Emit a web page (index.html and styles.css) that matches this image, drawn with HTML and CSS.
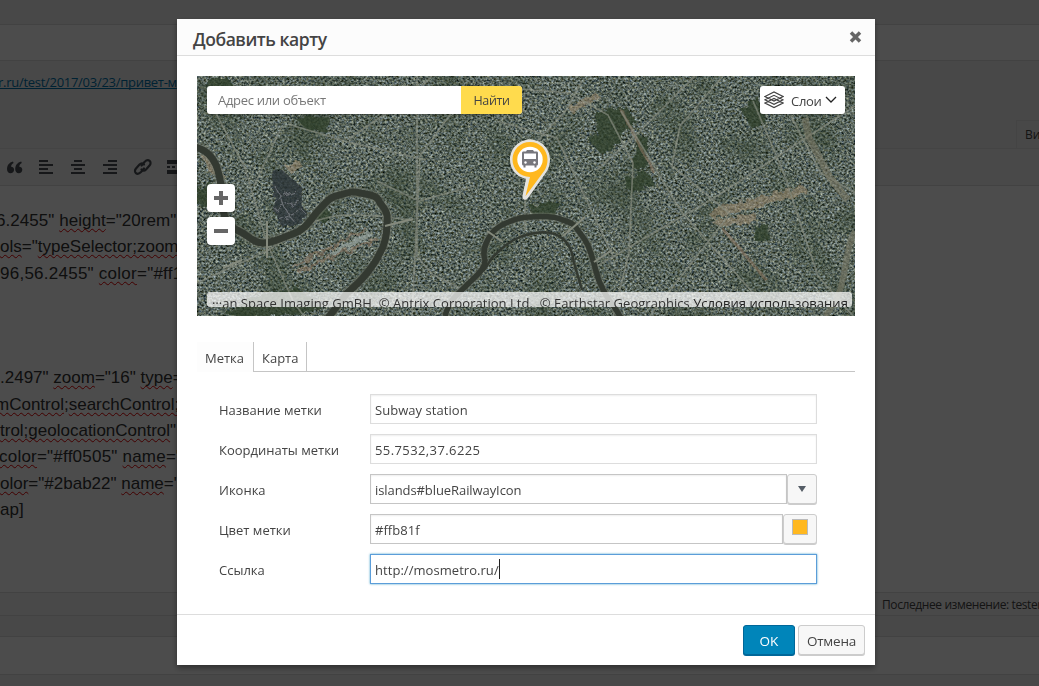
FILE: index.html
```html
<!DOCTYPE html>
<html lang="ru">
<head>
<meta charset="utf-8">
<title>Добавить карту</title>
<link rel="stylesheet" href="styles.css">
</head>
<body>
<div class="page">
  <div class="strip strip-top"></div>
  <div class="strip strip-title"></div>
  <div class="permalink"><a class="link">r.ru/test/2017/03/23/привет-м</a><div class="mode-tab">Ви</div></div>
  <div class="toolbar">
    <svg class="tools" width="190" height="36" viewBox="0 149 190 36" fill="#4a4f55">
      <path d="M13 161.500c-4 1-6 4-6 7.500 0 2.500 1.300 4.200 3.500 4.200s3.600-1.500 3.600-3.400c0-1.800-1.300-3-3-3 .1-1.700.9-2.900 2.500-3.700zm8.200 0c-4 1-6 4-6 7.500 0 2.500 1.300 4.200 3.500 4.200s3.600-1.500 3.600-3.400c0-1.800-1.300-3-3-3 .1-1.700.9-2.900 2.500-3.700z"/>
      <path d="M39 160h9v2h-9zm0 4h14v2H39zm0 4h9v2h-9zm0 4h14v2H39zM74 160h8v2h-8zm-3 4h14v2H71zm3 4h8v2h-8zm-3 4h14v2H71zM108 160h9v2h-9zm-5 4h14v2h-14zm5 4h9v2h-9zm-5 4h14v2h-14zM167 160h14v4h-14zm0 6h3v2h-3zm5 0h3v2h-3zm5 0h3v2h-3zm-10 4h14v4h-14z"/>
      <g fill="none" stroke="#4a4f55" stroke-width="2.200" stroke-linecap="round"><path d="M141.500 165.500l3-3.500c4-4 8 0 5 3.500l-3.500 4c-1.500 1.500-3.300 1.200-4.500 0"/><path d="M144 168.500l-3 3.500c-4 4-8 0-5-3.500l3.500-4c1.500-1.500 3.300-1.200 4.500 0"/></g>
    </svg>
  </div>
  <div class="editor">
    <p class="row r1">6.2455" <u>height</u>="20rem"</p>
    <p class="row r2"><u>ols</u>="<u>typeSelector;zoom</u></p>
    <p class="row r3">96,56.2455" <u>color</u>="#ff1</p>
    <p class="row r4">.2497" <u>zoom</u>="16" <u>type</u>=</p>
    <p class="row r5"><u>mControl</u>;<u>searchControl;</u></p>
    <p class="row r2"><u>trol;geolocationControl</u>"</p>
    <p class="row r7"><u>color</u>="#ff0505" <u>name</u>="</p>
    <p class="row r2"><u>olor</u>="#2bab22" <u>name</u>="</p>
    <p class="row r2">ap]</p>
  </div>
  <div class="status">Последнее изменение: tester</div>
  <div class="strip strip-gap"></div>
  <div class="strip strip-box"></div>
  <div class="strip strip-end"></div>
</div>

<div class="overlay">
  <div class="modal">
    <div class="modal-head"><span class="title">Добавить карту</span>
      <svg class="close" width="13" height="12" viewBox="0 0 13 12"><path d="M2 1.500l9 9M11 1.500l-9 9" stroke="#666" stroke-width="3.500"/></svg>
    </div>
    <div class="modal-body">
      <div class="map">
        <svg class="satellite" width="658" height="240" viewBox="0 0 658 240">
          <defs>
            <filter id="city" x="0" y="0" width="100%" height="100%" color-interpolation-filters="sRGB">
              <feTurbulence type="fractalNoise" baseFrequency=".42 .46" numOctaves="3" seed="7"/>
              <feColorMatrix values=".95 .16 0 0 -.2  .96 .12 .06 0 -.17  .94 0 .2 0 -.2  0 0 0 0 1"/>
            </filter>
            <filter id="zones" x="0" y="0" width="100%" height="100%" color-interpolation-filters="sRGB">
              <feTurbulence type="fractalNoise" baseFrequency=".022" numOctaves="4" seed="12"/>
              <feColorMatrix values="0 0 0 0 .18  0 0 0 0 .24  0 0 0 0 .16  3 0 0 0 -1.400"/>
            </filter>
            <filter id="rough" x="-10%" y="-10%" width="120%" height="120%">
              <feTurbulence type="fractalNoise" baseFrequency=".12" numOctaves="2" seed="4"/>
              <feDisplacementMap in="SourceGraphic" scale="9"/>
            </filter>
            <pattern id="blocksA" width="9" height="7" patternUnits="userSpaceOnUse" patternTransform="rotate(32)"><path d="M0 0h9M0 0v7" stroke="#a9afa3" stroke-width=".8"/><path d="M3 3h4v2H3z" fill="#2b3329"/></pattern>
            <pattern id="blocksB" width="8" height="10" patternUnits="userSpaceOnUse" patternTransform="rotate(-28)"><path d="M0 0h8M0 0v10" stroke="#b4bab0" stroke-width=".8"/><path d="M3 2h2v5H3z" fill="#29332a"/></pattern>
          </defs>
          <rect width="658" height="240" filter="url(#city)"/>
          <g filter="url(#rough)">
            <path d="M0 0h250l-40 90-80 30L0 80zM400 100l258 50v90H420z" fill="url(#blocksA)" opacity=".2"/>
            <path d="M240 0h300l-70 110-40 100-110-90-90 40-70-40zM540 60l118-40v120l-90 20z" fill="url(#blocksB)" opacity=".2"/>
          </g>
          <rect width="658" height="240" filter="url(#zones)" opacity=".42"/>
          <g filter="url(#rough)">
            <g fill="#2c3c29" opacity=".75"><path d="M12 5l18-4 6 9-12 7-14-4zM98 42l20-2 16 2-5 14-17-1zM112 138l16-8 6 9-8 8zM397 38l32-8 10 16-22 20-15-7zM0 112l25-6 10 18-20 8-15-3zM440 58l12 4-4 30-12 3zM332 130l30-4-5 16-20-3zM557 150l14-3 1 16-14 2zM428 102l22-6 8 12-26 8zM50 222l50-10 26 20-40 8H30z"/><path d="M545 35l15-15 10 25-14 9zM391 63l28-16 5 20-20 11z"/></g>
            <g fill="#a18d72" opacity=".5"><path d="M510 137l20-8 42-11 36-7 2 7-38 10-55 15zM3 78l16 6 9 17-14-3zM88 90l14-6 4 8-13 5zM305 30l15-8 6 14-12 2zM370 30l30-12 4 4-30 14zM513 145l45-8 2 9-36 5z"/></g>
            <g fill="#2d3338" opacity=".8"><path d="M75 98l10-4 20 18 3 32-22 8-9-17z"/></g>
            <g stroke="#8e9298" stroke-width="1.200" opacity=".6"><path d="M78 110l17 34M75 124l24-10M78 134l24-10M82 144l24-10"/></g>
            <g fill="none" stroke="#947963" stroke-width="3" opacity=".5"><path d="M95 191l75-38M100 195l80-32M526 153l45 53M458 98l-34-64"/></g>
            <path d="M135 178l39-20" stroke="#9aa6a0" stroke-width="4" opacity=".7"/>
          </g>
          <g fill="none" stroke="#8b8f83" stroke-width="1.700" opacity=".65">
            <path d="M0 207l70-32 45-28c25-12 50-9 100-3M15 30l33 62 22 75 27 60 10 13M85 50L57 110M91 48l60 18 78 18M235 0l-18 18-67 46M220 0v180l15 18 31 16M263 25l-40 55-8 160M323 13l50 4 38 22 25 48-4 90-20 80M385 5l-15 28-48 52M424 35l60 100 72 82M498 0l-58 58-40 36M526 0l-43 50-8 40M556 25l30 70 35 105 35 40M594 40l30 57 34 20M300 45l60 17 56 118M658 30L520 120 400 190M475 90l58 48-80 102M328 110v45M180 105l42 20 55-15"/>
          </g>
          <path d="M608 42l4 20 21 40 18 22" fill="none" stroke="#777462" stroke-width="7" opacity=".6"/>
          <path d="M658 155c-14 25-4 55-30 85" fill="none" stroke="#727363" stroke-width="6" opacity=".7"/>
          <g fill="none" stroke="#72786b" stroke-linejoin="round" opacity=".5">
            <path d="M-2 71C20 76 23 99 25 117c0 18 2 31 15 37s16 13 26 13 18-5 27-8c16-5 20-15 27-23 9-10 14-16 23-17 10-3 14-4 20-2 12 2 18 3 20 10 7 8 8 13 7 20 0 14-2 17-4 24-6 12-8 16-16 26-7 9-12 13-20 20l-19 25" stroke-width="10"/>
            <path d="M248 240c4-14 8-18 22-31 8-8 18-15 18-25-3-9 0-17 7-27 8-10 28-16 38-16 12-1 24-1 33 3 13 4 12 7 17 13 8 10 9 15 12 24 4 12 5 22 10 30 4 11 10 15 19 31" stroke-width="8"/>
          </g>
          <g fill="none" stroke="#333931" stroke-linejoin="round">
            <path d="M-2 71C20 76 23 99 25 117c0 18 2 31 15 37s16 13 26 13 18-5 27-8c16-5 20-15 27-23 9-10 14-16 23-17 10-3 14-4 20-2 12 2 18 3 20 10 7 8 8 13 7 20 0 14-2 17-4 24-6 12-8 16-16 26-7 9-12 13-20 20l-19 25" stroke-width="7"/>
            <path d="M248 240c4-14 8-18 22-31 8-8 18-15 18-25-3-9 0-17 7-27 8-10 28-16 38-16 12-1 24-1 33 3 13 4 12 7 17 13 8 10 9 15 12 24 4 12 5 22 10 30 4 11 10 15 19 31" stroke-width="5.500"/>
            <path d="M286 195c6-6 6-12 14-18 9-10 22-17 33-19 12-3 24-2 32 4 9 7 10 15 12 25l8 27" stroke-width="2.500"/>
          </g>
          <g stroke="#858a7d" stroke-width="2"><path d="M70 145v37M188 150l28-7M290 155l16 11M366 160l22-19M397 186l18-12M26 192l19-8"/></g>
        </svg>
        <div class="map-ui">
          <div class="map-top">
            <div class="search"><span class="search-input">Адрес или объект</span><span class="search-btn">Найти</span></div>
            <div class="layers">
              <svg width="20" height="18" viewBox="0 0 20 18" fill="#fff" stroke="#444" stroke-width="1.200"><path d="M1 12l9-4.500 9 4.500-9 4.500zM1 8.800l9-4.500 9 4.500-9 4.500zM1 5.500L10 1l9 4.500-9 4.500z"/></svg>
              <span class="layers-text">Слои</span>
              <svg class="chev" width="12" height="8" viewBox="0 0 12 8"><path d="M1 1l5 5 5-5" fill="none" stroke="#222" stroke-width="1.300"/></svg>
            </div>
          </div>
          <div class="zoom">
            <div class="zoom-btn"><svg width="14" height="14"><path d="M5 0h4v5h5v4H9v5H5V9H0V5h5z" fill="#666"/></svg></div>
            <div class="zoom-btn"><svg width="14" height="14"><path d="M0 5h14v4H0z" fill="#666"/></svg></div>
          </div>
        </div>
        <svg class="pin" width="42" height="64" viewBox="0 0 42 64">
          <path d="M21 .5C10 .5 1 9.500 1 20.500c0 9.500 6 17 16 19.300L13.500 57c-.6 4 3.600 5 5.700 1.800L37.500 33c2.200-3.500 3.500-8 3.500-12.500C41 9.500 32 .5 21 .5z" fill="#e4e3df"/>
          <path d="M21 3C11.300 3 3.500 10.800 3.500 20.500S11 37.700 21 38L16.500 57.200 35.500 31.500c2-3.200 3-6.800 3-11C38.500 10.800 30.700 3 21 3z" fill="#ffb81f"/>
          <circle cx="21" cy="20.500" r="12.700" fill="#fff"/>
          <path d="M18 11h6l1 1.500h2.500c1 0 1.500.6 1.500 1.500v11c0 1-.6 1.500-1.500 1.500v2h-2v-2h-9v2h-2v-2c-1 0-1.500-.6-1.500-1.500V14c0-.9.500-1.500 1.500-1.500H17z" fill="#77777c"/>
          <path d="M15 14.500h12V20H15z" fill="#fff"/><circle cx="16.500" cy="23.500" r="1.200" fill="#fff"/><circle cx="25.500" cy="23.500" r="1.200" fill="#fff"/>
        </svg>
        <div class="copyright"><span class="dots">…</span><span class="copy-text">an Space Imaging GmBH, © Antrix Corporation Ltd., © Earthstar Geographics <span class="terms">Условия использования</span></span></div>
      </div>
      <div class="tabs"><span class="tab tab-on">Метка</span><span class="tab tab-off">Карта</span><span class="tab-rest"></span></div>
      <div class="form">
        <div class="field"><label>Название метки</label><div class="input">Subway station</div></div>
        <div class="field"><label>Координаты метки</label><div class="input coords">55.7532,37.6225</div></div>
        <div class="field"><label>Иконка</label><div class="input dark icon-value">islands#blueRailwayIcon</div><div class="side-btn drop"><svg width="8" height="6"><path d="M0 0h8L4 6z" fill="#555d66"/></svg></div></div>
        <div class="field"><label>Цвет метки</label><div class="input dark">#ffb81f</div><div class="side-btn color"><i class="swatch"></i></div></div>
        <div class="field"><label>Ссылка</label><div class="input focus">http://mosmetro.ru/<i class="caret"></i></div></div>
      </div>
    </div>
    <div class="modal-foot"><span class="btn ok">OK</span><span class="btn cancel">Отмена</span></div>
  </div>
</div>
</body>
</html>
```

FILE: styles.css
```css
* { box-sizing: border-box; }
body { margin: 0; width: 1039px; height: 686px; overflow: hidden; background: #f1f1f1; font: 13px "Open Sans", "Noto Sans", sans-serif; color: #444; }
.page { width: 1039px; height: 686px; overflow: hidden; display: flex; flex-direction: column; }
.strip { flex: none; border-bottom: 1px solid #dedede; }
.strip-top { height: 25px; }
.strip-title { height: 36px; background: #fff; }
.permalink { height: 88px; flex: none; display: flex; justify-content: space-between; border-bottom: 1px solid #e5e5e5; }
.link { color: #0073aa; text-decoration: underline; text-decoration-skip-ink: none; padding-top: 12px; margin-left: -2px; letter-spacing: -.28px; }
.mode-tab { width: 23px; height: 28px; margin-top: 59px; padding: 5px 0 0 8px; border: 1px solid #e5e5e5; border-width: 1px 0 0 1px; font-size: 12px; }
.toolbar { height: 37px; flex: none; background: #f5f5f5; border-bottom: 1px solid #dedede; }
.tools { display: block; }
.editor { flex: none; height: 406px; background: #fff; padding-top: 22px; font: 17px/26.400px "Liberation Sans", Arial, sans-serif; color: #333; }
.row { margin: 0; white-space: nowrap; }
.row u { text-decoration: underline wavy #e00000 1px; text-decoration-skip-ink: none; text-underline-offset: 2px; }
.r1 { margin-left: -4px; letter-spacing: .05px; }
.r3 { letter-spacing: .25px; }
.r4 { margin-top: 78px; }
.r5 { margin-left: -5px; }
.r7 { margin-left: -1px; letter-spacing: .22px; }
.status { height: 24px; flex: none; border: 1px solid #dedede; border-width: 1px 0; padding-left: 882px; font-size: 12px; line-height: 24px; white-space: nowrap; color: #444; background: #f5f5f5; letter-spacing: -.4px; }
.strip-gap { height: 21px; }
.strip-box { height: 38px; background: #fff; }
.strip-end { height: 12px; }
.overlay { position: fixed; inset: 0; background: rgba(0,0,0,.7); padding: 19px 0 0 177px; }
.modal { width: 698px; height: 646px; background: #fff; box-shadow: 0 3px 6px rgba(0,0,0,.4); display: flex; flex-direction: column; }
.modal-head { height: 37px; flex: none; background: #fcfcfc; border-bottom: 1px solid #ddd; display: flex; justify-content: space-between; align-items: center; padding: 0 13px 0 16px; }
.title { font-size: 17.500px; font-weight: 600; line-height: 24px; padding-top: 3px; letter-spacing: -.45px; }
.modal-body { flex: none; height: 558px; padding: 20px; }
.map { position: relative; width: 658px; height: 240px; overflow: hidden; background: #50594e; }
.satellite { display: block; }
.map-ui { position: absolute; inset: 0; padding: 10px; }
.map-top { display: flex; justify-content: space-between; height: 28px; }
.search, .layers { display: flex; background: #fff; border-radius: 3px; overflow: hidden; box-shadow: 0 1px 2px rgba(0,0,0,.25); }
.search-input { width: 254px; padding-left: 11px; line-height: 28px; color: #777; letter-spacing: -.3px; }
.search-btn { width: 61px; background: #ffdb4d; text-align: center; line-height: 30px; font-size: 12.500px; letter-spacing: -.4px; }
.layers { width: 85px; align-items: center; padding-left: 4px; }
.layers-text { margin: 2px 3px 0 7px; letter-spacing: -.3px; }
.zoom { margin-top: 70px; display: flex; flex-direction: column; gap: 5px; }
.zoom-btn { width: 28px; height: 28px; border-radius: 4px; background: #fff; display: grid; place-items: center; box-shadow: 0 1px 2px rgba(0,0,0,.25); }
.pin { position: absolute; left: 312px; top: 63px; }
.copyright { position: absolute; left: 10px; top: 216px; width: 645px; height: 15px; border-radius: 3px; background: rgba(255,255,255,.72); white-space: nowrap; line-height: 23px; color: #333; padding: 0 5px; display: flex; justify-content: space-between; overflow: hidden; }
.dots { line-height: 14px; }
.copy-text { letter-spacing: .04px; }
.terms { color: #222; text-decoration: underline; text-decoration-skip-ink: none; text-underline-offset: 0; }
.tabs { display: flex; height: 30px; margin-top: 26px; }
.tab { padding: 7px 8px 0; line-height: 18px; border-right: 1px solid #c5c5c5; }
.tab-on { width: 57px; background: #fdfdfd; }
.tab-off { width: 53px; border-bottom: 1px solid #c5c5c5; }
.tab-rest { flex: 1; border-bottom: 1px solid #c5c5c5; }
.form { padding: 22px 38px 0 22px; display: flex; flex-direction: column; gap: 10px; }
.field { display: flex; height: 30px; }
.field label { width: 151px; line-height: 32px; flex: none; }
.input { flex: 1; height: 30px; border: 1px solid #ddd; padding: 2px 0 0 4px; box-shadow: inset 0 1px 2px rgba(0,0,0,.07); display: flex; align-items: center; letter-spacing: .05px; }
.coords { letter-spacing: .4px; }
.icon-value { letter-spacing: -.08px; }
.dark { border-color: #c5c5c5; }
.focus { border-color: #5b9dd9; box-shadow: 0 0 2px rgba(30,140,190,.8); }
.caret { width: 1px; height: 20px; margin-bottom: 2px; background: #222; }
.side-btn { height: 30px; border: 1px solid #ccc; border-radius: 3px; background: #f7f7f7; box-shadow: 0 1px 0 #ccc; display: flex; align-items: center; justify-content: center; }
.drop { width: 30px; }
.color { width: 34px; padding-bottom: 4px; }
.swatch { width: 16px; height: 16px; background: #ffb81f; border: 1px solid #bbb; }
.modal-foot { flex: 1; border-top: 1px solid #ddd; padding: 10px 10px 0; display: flex; justify-content: flex-end; gap: 3px; background: #fff; }
.btn { height: 30px; border-radius: 3px; font-size: 13.500px; line-height: 31px; text-align: center; border: 1px solid #ccc; box-shadow: 0 1px 0 #ccc; background: #f7f7f7; }
.ok { width: 52px; background: #0085ba; color: #fff; border-color: #006799; box-shadow: 0 1px 0 #006799; }
.cancel { width: 67px; letter-spacing: -.2px; }
```
